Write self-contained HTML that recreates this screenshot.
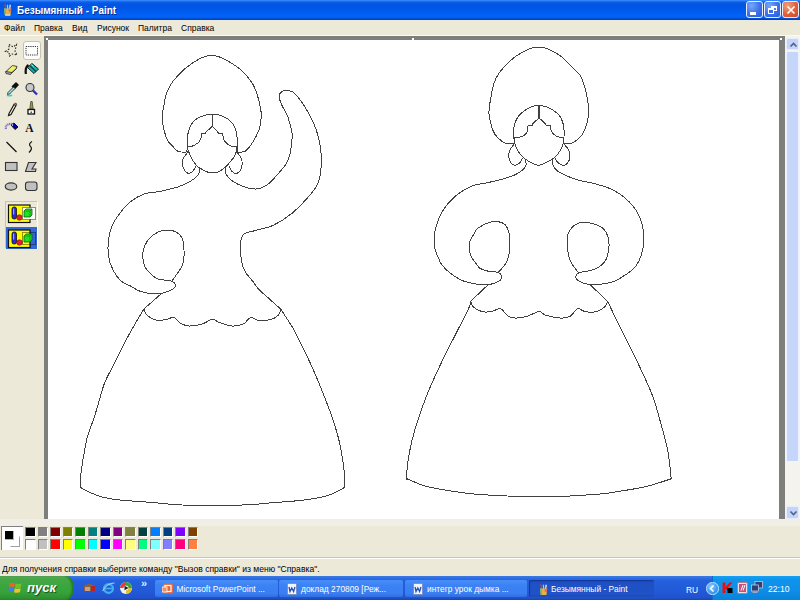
<!DOCTYPE html>
<html><head><meta charset="utf-8">
<style>
*{margin:0;padding:0;box-sizing:border-box}
html,body{width:800px;height:600px;overflow:hidden;background:#ece9d8;font-family:"Liberation Sans",sans-serif}
.abs{position:absolute}
#title{left:0;top:0;width:800px;height:20px;background:linear-gradient(#3d92ff 0px,#1a6af0 1.5px,#0656e4 3px,#0055e4 6px,#005bec 11px,#0062f6 16px,#0060f4 17.5px,#0046c8 19px,#0040b8 20px)}
#title .t{left:17px;top:4px;color:#fff;font-size:10.6px;font-weight:bold;white-space:nowrap;transform-origin:0 0;transform:scaleX(0.94);text-shadow:1px 1px 0 #0b2a8a}
.wb{top:1px;width:17px;height:17px;border:1px solid #e8eefc;border-radius:3px;background:radial-gradient(circle at 30% 25%,#7aa6f8,#3a72ea 55%,#2a5ad8)}
#menu{left:0;top:20px;width:800px;height:16px;font-size:9.2px;color:#000;background:#ece9d8}
#menu span{position:absolute;top:2.5px;white-space:nowrap;transform:scaleX(0.925);transform-origin:0 0}
#canvasbg{left:44px;top:36px;width:741px;height:483px;background:#7e7f7a}
#canvas{left:48px;top:40px;width:731px;height:478.5px;background:#fff}
#status{left:0;top:557px;width:800px;height:19px;background:#ece9d8;border-top:1px solid #c8c5b5}
#status .t{left:1.5px;top:5.5px;font-size:9px;color:#000;white-space:nowrap;transform:scaleX(0.953);transform-origin:0 0}
#task{left:0;top:576px;width:800px;height:24px;background:linear-gradient(#3d83f0 0%,#2c6fe8 8%,#245fdc 20%,#225ad8 60%,#2152d0 90%,#1a45b0 100%)}
.tb{top:3.5px;height:17.5px;border-radius:2px;background:linear-gradient(#4a8ef6,#3c82f4 30%,#3a7ef2 80%,#2f6ee0);color:#fff;font-size:8.4px}
.tb span{position:absolute;left:22px;top:4.5px;white-space:nowrap}
.sw{position:absolute;width:10.5px;height:10.5px;border-top:1px solid #808080;border-left:1px solid #808080;border-right:1px solid #fff;border-bottom:1px solid #fff}
</style></head><body>
<div id="title" class="abs">
  <svg class="abs" style="left:3px;top:3px" width="9" height="13" viewBox="0 0 9 13">
    <path d="M1.2 1.5L2.5 1L3.2 6L2 6Z" fill="#b04848"/>
    <path d="M3.8 2L5 1.5L5.3 6L4 6Z" fill="#a0d8a0"/>
    <path d="M6.5 1.5L8 2L7.2 6L6 6Z" fill="#d8e0f8"/>
    <path d="M1 5.5L8.2 5.5L7.5 12L1.8 12Z" fill="#e8b040"/>
    <path d="M1 5.5L3 5.5L2.8 12L1.8 12Z" fill="#60c080"/>
    <path d="M5.5 6L8.2 5.5L7.8 9L5.8 9Z" fill="#e87060"/>
    <path d="M2 11.5L7.5 11.5L7.3 12.8L2.2 12.8Z" fill="#d8e8f8"/>
  </svg>
  <div class="abs t" id="ttl">Безымянный - Paint</div>
  <div class="abs wb" style="left:746px"><div class="abs" style="left:3px;top:10px;width:5.5px;height:2.5px;background:#fff"></div></div>
  <div class="abs wb" style="left:764px"><div class="abs" style="left:5.5px;top:3.5px;width:6px;height:5px;border:1px solid #fff;border-top-width:2px"></div><div class="abs" style="left:3px;top:6px;width:6px;height:5.5px;border:1px solid #fff;border-top-width:2px;background:#3a6ee6"></div></div>
  <div class="abs wb" style="left:782px;background:radial-gradient(circle at 30% 25%,#f0a080,#e0603a 55%,#c8482a)">
    <svg class="abs" style="left:2px;top:2px" width="12" height="12"><path d="M2.5 2.5L9.5 9.5M9.5 2.5L2.5 9.5" stroke="#fff" stroke-width="1.6"/></svg>
  </div>
</div>
<div id="menu" class="abs">
  <span style="left:4px">Файл</span>
  <span style="left:34px">Правка</span>
  <span style="left:72px">Вид</span>
  <span style="left:97px">Рисунок</span>
  <span style="left:138px">Палитра</span>
  <span style="left:181px">Справка</span>
</div>
<div class="abs" style="left:0;top:35px;width:800px;height:1px;background:#fbfaf4"></div>
<div class="abs" style="left:22.5px;top:41px;width:18px;height:19px;border-radius:3px;background:#fdfdfb;border:1px solid #c4c1b2"></div><svg class="abs" style="left:0;top:36px" width="44" height="220" viewBox="0 0 44 220"><path d="M9 8.5L13 11L16.5 8.5L15 15L17 19L12 18L9.5 20L9 16L5.5 15.5L9 13Z" fill="none" stroke="#222" stroke-width="1.1" stroke-dasharray="1.5 1.5"/><rect x="26" y="10.5" width="11.5" height="8.5" fill="none" stroke="#333" stroke-width="1" stroke-dasharray="1.2 1"/><path d="M6 35.5L12.5 29.5L17 30.5L16 33L10.5 38Z" fill="#f0f070" stroke="#333" stroke-width="0.9"/><path d="M5.5 35.5L6 37.5L10.5 38.5L12 36.5Z" fill="#b0b0b0" stroke="#333" stroke-width="0.9"/><path d="M12 36.5L16.5 32.5" stroke="#333" stroke-width="0.9"/><path d="M25.8 38Q25 31 28.5 29" fill="none" stroke="#111" stroke-width="2.2"/><path d="M27.5 31.5L32 27.5L38.5 33L34 37.5Z" fill="#18b0b0" stroke="#102020" stroke-width="1"/><path d="M30 30L36 35.5" stroke="#0a4040" stroke-width="1.3"/><path d="M31.5 28.5L33.5 30.5" stroke="#a0f0f0" stroke-width="1"/><path d="M12.5 50.5L16 47L18 49L14.5 52.5Z" fill="#111" stroke="#111" stroke-width="1.6" stroke-linejoin="round"/><path d="M13.5 51L8 56.5L7.5 58.5L9.5 58L15 52.5Z" fill="#a0f0f0" stroke="#222" stroke-width="0.9"/><ellipse cx="9.5" cy="59.5" rx="3" ry="1.1" fill="#30d0d0"/><circle cx="30" cy="51.5" r="4" fill="#c8c8c8" stroke="#333" stroke-width="1.1"/><path d="M33 54.5L37 58.5" stroke="#3030c0" stroke-width="2.4"/><path d="M9 77.5L14 68.5L16 69.5L11 78.5L8.5 79.5Z" fill="#f0f0d0" stroke="#111" stroke-width="1.1"/><path d="M14 68.5L15 67L17 68L16 69.5Z" fill="#c08080" stroke="#333" stroke-width="0.7"/><path d="M30.8 65.5L32.2 65.5L33.2 73L29.8 73Z" fill="#a0a020" stroke="#333" stroke-width="0.7"/><rect x="28" y="73.5" width="6.5" height="4.5" fill="#fff" stroke="#111" stroke-width="1.3"/><rect x="30.5" y="75.5" width="1.5" height="1.5" fill="#555"/><path d="M6 93Q5 90 8 88.5Q10 87.5 12 88" fill="none" stroke="#8070d0" stroke-width="2.2" stroke-dasharray="1 0.6"/><path d="M11 89L14 87L18 91L15 93.5Z" fill="#0000a0" stroke="#111" stroke-width="1"/><circle cx="12.5" cy="89" r="0.8" fill="#fff"/><text x="25.2" y="96.3" font-family="Liberation Serif" font-weight="bold" font-size="11.5" fill="#111">A</text><path d="M6.5 106L16.5 116" stroke="#111" stroke-width="1.2"/><path d="M32 105.5Q28 108 30.5 110.5Q33 112.5 29 116.5" fill="none" stroke="#111" stroke-width="1.2"/><rect x="5.5" y="126.5" width="11.5" height="8" fill="#c0c0c0" stroke="#333" stroke-width="1.1"/><path d="M28.5 126.5L36 126.5L32 133L36 133L35.5 135.5L25.5 135.5Z" fill="#c0c0c0" stroke="#333" stroke-width="1.1"/><ellipse cx="11" cy="150.5" rx="5.8" ry="3.6" fill="#c0c0c0" stroke="#333" stroke-width="1.1"/><rect x="25.5" y="146" width="11.5" height="8.5" rx="2.5" fill="#c0c0c0" stroke="#333" stroke-width="1.1"/></svg><div class="abs" style="left:5px;top:201px;width:32.5px;height:48px;border-top:1px solid #c8c4b4;border-left:1px solid #c8c4b4;border-right:1px solid #fff;border-bottom:1px solid #fff"></div><div class="abs" style="left:6px;top:227px;width:31px;height:21.5px;background:#3168d5"></div><svg class="abs" style="left:7px;top:203.5px" width="30" height="20" viewBox="0 0 30 20"><rect x="1.5" y="1" width="21.5" height="17.5" fill="#ffff00" stroke="#111" stroke-width="1.2"/><rect x="5" y="3" width="4.5" height="12" rx="2" fill="#2a2ad8" stroke="#111" stroke-width="0.8"/><rect x="6" y="4.5" width="1.2" height="6" fill="#a0a0ff"/><circle cx="12.5" cy="13.5" r="2.8" fill="#e02040" stroke="#600" stroke-width="0.5"/><rect x="15.5" y="3.5" width="13" height="12" fill="#fff" stroke="#111" stroke-width="0.9" stroke-dasharray="1 1"/><path d="M17 7L19 5L25 5L25 11L23 13L17 13Z" fill="#20e020" stroke="#106010" stroke-width="0.8"/><path d="M17 7L23 7L25 5M23 7L23 13" fill="none" stroke="#0a800a" stroke-width="0.6"/></svg><svg class="abs" style="left:7px;top:228.5px" width="30" height="20" viewBox="0 0 30 20"><rect x="1.5" y="1" width="21.5" height="17.5" fill="#ffff00" stroke="#111" stroke-width="1.2"/><rect x="5" y="3" width="4.5" height="12" rx="2" fill="#2a2ad8" stroke="#111" stroke-width="0.8"/><rect x="6" y="4.5" width="1.2" height="6" fill="#a0a0ff"/><circle cx="12.5" cy="13.5" r="2.8" fill="#e02040" stroke="#600" stroke-width="0.5"/><rect x="15.5" y="3.5" width="13" height="12" fill="none" stroke="#111" stroke-width="0.9" stroke-dasharray="1 1"/><path d="M17 7L19 5L25 5L25 11L23 13L17 13Z" fill="#20e020" stroke="#106010" stroke-width="0.8"/><path d="M17 7L23 7L25 5M23 7L23 13" fill="none" stroke="#0a800a" stroke-width="0.6"/></svg>
<div id="canvasbg" class="abs"></div>
<div id="canvas" class="abs"></div>
<div class="abs" style="left:779.5px;top:37.5px;width:2px;height:2px;background:#fff"></div><div class="abs" style="left:46px;top:38px;width:2px;height:2px;background:#fff"></div><div class="abs" style="left:412px;top:38px;width:2px;height:2px;background:#fff"></div>
<div class="abs" style="left:785px;top:36px;width:15px;height:483px;background:#f4f3ee"></div>
<div class="abs" style="left:786px;top:37.5px;width:12.5px;height:12.5px;border-radius:2px;background:#c4d3fb;border:1px solid #e6eefc">
  <svg class="abs" style="left:1.5px;top:2px" width="9" height="8"><path d="M1.5 5.5L4.5 2.5L7.5 5.5" fill="none" stroke="#4d6185" stroke-width="1.6"/></svg>
</div>
<div class="abs" style="left:786px;top:51px;width:12.5px;height:411px;border-radius:2px;background:#c6d6fb;border:1px solid #eef3fe"></div>
<div class="abs" style="left:786px;top:505.5px;width:12.5px;height:13px;border-radius:2px;background:#c4d3fb;border:1px solid #e6eefc">
  <svg class="abs" style="left:1.5px;top:2.5px" width="9" height="8"><path d="M1.5 2.5L4.5 5.5L7.5 2.5" fill="none" stroke="#4d6185" stroke-width="1.6"/></svg>
</div>
<svg class="abs" width="800" height="600" viewBox="0 0 800 600" style="left:0;top:0"><g fill="none" stroke="#404040" stroke-width="1" stroke-linejoin="round" shape-rendering="crispEdges"><path d="M187.5 152.0C186.0 151.9 180.9 152.6 178.3 151.5C175.7 150.4 173.8 147.4 172.0 145.5C170.2 143.6 168.7 143.0 167.3 140.0C165.9 137.0 164.4 131.4 163.5 127.5C162.6 123.6 162.1 119.8 162.1 116.5C162.1 113.2 162.8 111.5 163.5 107.8C164.2 104.0 164.9 98.1 166.3 94.0C167.7 89.9 169.3 86.7 171.8 83.0C174.3 79.3 178.4 75.0 181.4 72.0C184.4 69.0 186.6 67.3 189.6 65.1C192.6 62.9 196.6 60.4 199.3 58.9C202.1 57.4 204.1 56.7 206.1 56.2C208.1 55.7 209.8 55.8 211.6 55.8C213.4 55.8 214.8 55.6 217.1 56.2C219.4 56.8 222.2 57.9 225.4 59.6C228.6 61.3 233.2 64.2 236.4 66.5C239.6 68.8 241.9 70.4 244.7 73.4C247.4 76.4 250.8 81.0 252.9 84.4C255.0 87.8 255.7 90.1 257.0 94.0C258.3 97.9 259.8 104.0 260.5 107.8C261.2 111.5 261.3 113.2 261.2 116.5C261.1 119.8 260.7 124.1 259.8 127.5C258.9 130.9 257.2 134.1 255.7 137.1C254.1 140.1 252.2 143.2 250.5 145.5C248.8 147.8 247.2 149.9 245.5 151.0C243.8 152.1 241.9 152.1 240.5 152.3C239.1 152.5 237.8 152.3 237.2 152.3"/><path d="M187.0 152.0C187.0 151.1 187.0 149.3 187.1 146.4C187.2 143.5 187.0 138.4 187.7 134.7C188.4 131.0 189.6 127.2 191.2 124.4C192.8 121.7 195.0 119.8 197.4 118.2C199.8 116.7 203.2 115.7 205.6 115.1C208.0 114.5 209.8 114.4 212.1 114.4C214.4 114.4 216.8 114.3 219.4 115.1C222.0 115.8 225.3 117.4 227.6 118.9C229.9 120.5 231.6 122.1 233.1 124.4C234.6 126.7 235.8 128.9 236.5 132.6C237.2 136.3 237.5 143.2 237.6 146.4C237.7 149.6 237.3 151.1 237.2 152.0"/><path d="M187.0 146.4C187.2 147.2 187.6 148.8 188.4 151.0C189.2 153.2 190.7 156.9 192.1 159.3C193.5 161.8 195.3 164.2 196.7 165.7C198.1 167.2 198.6 167.3 200.4 168.4C202.2 169.5 205.8 171.3 207.7 172.1C209.6 172.9 210.3 173.0 212.0 173.0C213.7 173.0 215.8 172.9 218.0 172.0C220.2 171.1 223.0 169.2 225.0 167.5C227.0 165.8 228.5 163.8 230.0 162.0C231.5 160.2 233.0 158.7 234.0 157.0C235.0 155.3 235.5 153.8 236.0 152.0C236.5 150.2 237.0 147.3 237.2 146.4"/><path d="M212.1 114.4L212.1 126.4"/><path d="M212.1 126.4C211.8 126.7 211.0 127.6 210.4 128.2C209.8 128.8 209.1 129.3 208.4 129.9C207.7 130.5 206.9 131.3 206.3 131.9C205.7 132.5 205.7 133.0 204.9 133.3C204.1 133.7 202.1 133.5 201.5 134.0C200.9 134.5 201.3 135.3 201.2 136.1C201.1 136.9 201.2 137.8 200.8 138.8C200.4 139.8 199.6 141.2 198.7 142.2C197.8 143.2 196.3 144.0 195.3 144.6C194.3 145.2 194.0 145.7 192.6 146.0C191.2 146.3 188.0 146.3 187.1 146.4"/><path d="M212.1 126.4C212.5 126.8 213.8 128.1 214.6 128.8C215.3 129.5 215.9 129.8 216.6 130.6C217.3 131.3 217.7 132.7 218.7 133.3C219.7 133.9 221.8 133.4 222.5 134.0C223.2 134.6 222.8 135.7 223.1 136.7C223.4 137.7 223.6 139.0 224.2 140.2C224.8 141.3 225.8 142.6 226.9 143.6C228.0 144.6 229.3 145.5 231.0 146.0C232.7 146.5 236.2 146.3 237.2 146.4"/><path d="M187.5 152.4C186.9 153.2 184.8 155.8 183.9 157.4C183.0 159.0 182.1 160.2 182.0 162.0C181.9 163.8 182.5 166.6 183.4 168.4C184.3 170.2 186.1 172.4 187.5 173.0C188.9 173.6 190.7 172.9 192.0 172.0C193.3 171.1 194.6 168.6 195.3 167.5C196.0 166.4 196.0 166.0 196.2 165.7"/><path d="M236.0 151.5C236.7 152.2 239.0 154.4 240.0 156.0C241.0 157.6 241.8 159.0 242.0 161.0C242.2 163.0 242.3 165.9 241.5 168.0C240.7 170.1 238.6 172.9 237.0 173.5C235.4 174.1 233.3 172.7 232.0 171.5C230.7 170.3 229.5 167.2 229.0 166.3"/><path d="M199.4 168.4C199.3 169.2 199.4 171.6 199.0 173.0C198.6 174.4 198.1 175.3 196.7 176.7C195.2 178.1 193.4 179.6 190.3 181.3C187.2 183.0 183.4 185.1 178.3 186.8C173.2 188.5 165.7 190.2 160.0 191.4C154.3 192.6 149.0 192.2 144.0 194.0C139.0 195.8 134.0 198.8 130.0 202.0C126.0 205.2 123.0 209.0 120.0 213.0C117.0 217.0 113.9 221.5 112.0 226.0C110.1 230.5 109.1 235.0 108.5 240.0C107.9 245.0 107.8 251.0 108.5 256.0C109.2 261.0 110.9 265.8 113.0 270.0C115.1 274.2 118.2 278.4 121.0 281.0C123.8 283.6 126.8 284.1 130.0 285.8C133.2 287.5 136.2 289.9 140.0 291.2C143.8 292.6 148.6 293.5 152.5 293.8C156.4 294.0 159.8 293.7 163.3 292.9C166.8 292.1 171.3 290.1 173.3 288.8C175.3 287.4 175.7 285.9 175.4 284.6C175.1 283.4 174.7 282.2 171.7 281.2C168.7 280.3 161.2 280.2 157.5 278.8C153.8 277.3 151.4 274.8 149.2 272.5C147.0 270.2 145.2 268.4 144.2 265.0C143.2 261.6 142.4 256.2 143.0 252.0C143.6 247.8 145.5 243.3 148.0 240.0C150.5 236.7 154.7 233.7 158.0 232.0C161.3 230.3 165.0 230.0 168.0 230.0C171.0 230.0 173.7 230.7 176.0 232.0C178.3 233.3 180.7 235.0 182.0 238.0C183.3 241.0 183.9 245.5 184.0 250.0C184.1 254.5 184.6 259.8 182.5 265.0C180.4 270.2 173.5 278.5 171.7 281.2"/><path d="M161.7 293.3L143.8 309.1"/><path d="M143.8 309.1C144.4 310.2 145.3 313.7 147.5 315.6C149.7 317.5 153.8 319.7 156.9 320.3C160.0 320.9 163.5 319.9 166.3 319.4C169.1 318.9 171.5 316.9 173.8 317.5C176.1 318.1 177.8 321.7 180.3 323.1C182.8 324.5 185.2 325.8 188.8 326.0C192.4 326.2 198.0 325.2 201.9 324.1C205.8 323.0 209.4 319.7 212.2 319.4C215.0 319.1 215.5 321.1 218.8 322.2C222.1 323.3 227.8 325.7 231.9 326.0C236.0 326.3 240.1 325.5 243.2 324.1C246.3 322.7 248.2 318.1 250.7 317.5C253.2 316.9 254.8 320.0 258.2 320.3C261.6 320.6 267.9 320.3 271.3 319.4C274.7 318.5 277.2 316.4 278.8 314.7C280.4 313.0 280.4 310.0 280.7 309.1"/><path d="M225.3 167.7C225.4 168.8 225.1 171.9 226.0 174.0C226.9 176.1 228.2 177.9 231.0 180.0C233.8 182.1 238.8 185.0 243.0 186.5C247.2 188.0 252.0 189.2 256.0 189.0C260.0 188.8 263.5 187.3 267.0 185.0C270.5 182.7 273.8 178.5 277.0 175.0C280.2 171.5 283.8 167.5 286.0 164.0C288.2 160.5 289.1 157.3 290.0 154.0C290.9 150.7 291.2 147.4 291.5 144.0C291.8 140.6 292.6 137.8 292.0 133.3C291.4 128.9 289.8 122.2 288.0 117.3C286.2 112.4 282.8 107.5 281.3 104.0C279.8 100.5 279.0 98.1 279.2 96.0C279.4 93.9 281.0 92.1 282.7 91.2C284.4 90.3 287.1 90.1 289.3 90.7C291.5 91.3 292.9 91.2 296.0 94.7C299.1 98.2 304.4 105.6 308.0 112.0C311.6 118.4 315.1 125.8 317.3 133.3C319.5 140.9 321.1 149.3 321.3 157.3C321.5 165.3 320.9 174.6 318.7 181.3C316.5 188.0 312.4 192.0 308.0 197.3C303.6 202.6 297.8 208.6 292.0 213.3C286.2 218.0 279.5 222.4 273.3 225.3C267.1 228.2 259.6 229.2 254.7 230.7C249.8 232.1 246.4 232.1 244.0 234.0C241.6 235.9 241.0 239.3 240.5 242.0C240.0 244.7 240.7 246.9 240.8 250.0C241.0 253.1 240.7 257.2 241.4 260.8C242.1 264.4 243.3 268.3 245.2 271.7C247.1 275.1 250.5 278.3 252.8 281.4C255.2 284.4 257.0 287.5 259.3 290.0C261.6 292.5 263.2 293.4 266.8 296.6C270.4 299.8 278.4 307.0 280.7 309.1"/><path d="M143.8 309.1C142.3 311.6 138.1 318.5 135.0 324.0C131.9 329.5 128.3 335.7 125.0 342.0C121.7 348.3 118.3 355.3 115.0 362.0C111.7 368.7 107.6 375.7 105.0 382.0C102.4 388.3 101.2 393.9 99.4 400.0C97.6 406.1 95.9 412.2 93.9 418.3C91.9 424.4 89.1 430.6 87.4 436.7C85.7 442.8 84.9 448.9 83.8 455.0C82.7 461.1 81.6 468.0 81.0 473.4C80.4 478.8 80.2 484.9 80.1 487.2"/><path d="M80.1 487.2C81.5 487.9 84.5 490.0 88.3 491.7C92.1 493.4 97.7 495.8 103.0 497.2C108.3 498.6 111.8 499.1 120.0 500.0C128.2 500.9 142.1 501.7 152.5 502.5C162.9 503.3 167.5 504.6 182.5 505.0C197.5 505.4 227.1 505.4 242.5 505.0C257.9 504.6 265.4 503.2 275.0 502.5C284.6 501.8 292.5 501.3 300.0 500.5C307.5 499.7 314.5 498.6 320.0 497.5C325.5 496.4 328.8 495.3 333.0 493.6C337.2 491.9 343.0 488.3 345.0 487.2"/><path d="M280.7 309.1C282.9 312.6 289.8 322.5 294.0 330.0C298.2 337.5 302.3 346.3 306.0 354.0C309.7 361.7 312.7 368.3 316.0 376.0C319.3 383.7 323.2 393.6 325.7 400.0C328.2 406.4 329.2 408.9 331.2 414.7C333.2 420.5 335.9 428.8 337.6 434.9C339.3 441.0 340.2 445.6 341.3 451.4C342.4 457.2 343.4 463.7 344.0 469.7C344.6 475.7 344.8 484.3 345.0 487.2"/><path d="M514.7 143.3C513.2 143.3 508.8 144.2 506.0 143.3C503.2 142.4 500.2 140.2 498.0 138.0C495.8 135.8 494.2 134.1 492.7 130.0C491.2 125.9 489.4 118.5 489.0 113.5C488.6 108.5 489.7 104.8 490.5 99.8C491.3 94.8 492.6 87.7 494.0 83.3C495.4 78.9 496.4 77.0 498.8 73.6C501.2 70.1 505.4 65.6 508.4 62.6C511.4 59.6 513.6 57.8 516.6 55.8C519.6 53.8 523.5 51.6 526.3 50.3C529.0 49.0 531.0 48.2 533.1 47.8C535.2 47.3 536.8 47.6 538.6 47.6C540.4 47.6 542.0 47.3 544.1 47.8C546.2 48.2 548.0 48.8 551.0 50.3C554.0 51.8 558.5 54.4 562.0 57.1C565.5 59.9 568.7 63.8 571.7 66.8C574.7 69.8 577.9 72.0 579.9 75.0C581.9 78.0 582.7 80.5 584.0 84.6C585.3 88.7 586.7 95.0 587.5 99.8C588.3 104.6 589.3 108.5 588.8 113.5C588.3 118.5 586.3 125.9 584.7 130.0C583.1 134.1 581.5 135.8 579.3 138.0C577.1 140.2 574.0 142.4 571.3 143.3C568.6 144.2 564.6 143.3 563.3 143.3"/><path d="M514.7 143.3C514.7 143.1 514.6 142.8 514.5 141.8C514.4 140.8 514.0 138.9 513.8 137.3C513.6 135.7 513.3 134.1 513.4 132.0C513.5 129.9 513.7 127.1 514.5 124.5C515.3 121.9 516.5 118.7 518.3 116.3C520.0 113.9 522.6 111.9 525.0 110.3C527.4 108.7 530.2 107.3 532.5 106.5C534.8 105.7 536.8 105.4 538.9 105.4C541.0 105.4 543.1 105.8 545.3 106.5C547.5 107.2 549.8 108.1 552.0 109.5C554.2 110.9 557.0 112.8 558.8 114.8C560.5 116.8 561.6 119.0 562.5 121.5C563.4 124.0 563.8 127.2 564.0 129.8C564.2 132.4 564.1 135.3 564.0 137.3C563.9 139.3 563.4 140.8 563.3 141.8C563.2 142.8 563.3 143.1 563.3 143.3"/><path d="M514.0 138.0C514.1 138.9 514.0 141.1 514.7 143.3C515.4 145.5 516.3 148.7 518.0 151.3C519.7 153.9 522.2 156.7 524.7 158.7C527.2 160.7 530.4 162.2 532.7 163.3C535.0 164.4 536.5 165.4 538.7 165.3C540.9 165.2 543.5 163.9 546.0 162.7C548.5 161.5 551.5 160.1 554.0 158.0C556.5 155.9 559.2 152.4 560.7 150.0C562.2 147.6 562.8 145.3 563.3 143.3C563.8 141.3 563.9 138.9 564.0 138.0"/><path d="M538.9 105.4L538.9 118.1" stroke-width="2"/><path d="M538.9 118.1C538.4 118.5 536.9 119.8 535.9 120.8C534.9 121.8 533.6 123.0 532.9 123.8C532.2 124.6 532.7 125.2 531.8 125.6C530.9 126.0 528.3 125.3 527.6 126.0C526.9 126.7 527.9 128.6 527.6 129.8C527.4 131.1 526.9 132.4 526.1 133.5C525.3 134.6 524.2 135.4 522.8 136.1C521.4 136.8 519.1 137.4 517.5 137.6C515.9 137.8 514.1 137.4 513.4 137.3"/><path d="M538.9 118.1C539.5 118.5 541.2 119.8 542.3 120.8C543.4 121.8 544.5 123.0 545.3 123.8C546.0 124.6 545.9 125.2 546.8 125.6C547.7 126.0 549.8 125.3 550.5 126.0C551.2 126.7 550.5 128.6 550.9 129.8C551.3 131.1 551.9 132.4 552.8 133.5C553.7 134.6 555.1 135.4 556.5 136.1C557.9 136.8 559.8 137.4 561.0 137.6C562.2 137.8 563.5 137.4 564.0 137.3"/><path d="M514.7 143.3C513.9 144.4 511.0 147.8 510.0 150.0C509.0 152.2 508.5 154.5 508.7 156.7C508.9 158.9 510.2 161.9 511.3 163.3C512.4 164.7 513.8 165.4 515.3 165.3C516.8 165.2 518.8 163.9 520.0 162.7C521.2 161.5 522.2 158.8 522.7 158.0"/><path d="M563.3 143.3C564.2 144.4 567.6 147.8 568.7 150.0C569.8 152.2 570.2 154.5 570.0 156.7C569.8 158.9 568.5 161.9 567.3 163.3C566.1 164.7 564.4 165.5 562.7 165.3C561.0 165.1 558.5 163.2 557.3 162.0C556.1 160.8 555.6 158.7 555.3 158.0"/><path d="M525.3 158.7C525.4 159.7 526.3 162.9 526.0 164.7C525.7 166.5 525.1 167.6 523.3 169.3C521.5 171.0 518.8 173.0 515.3 174.7C511.7 176.4 506.7 178.0 502.0 179.3C497.3 180.6 492.0 181.7 487.3 182.7C482.6 183.7 478.4 183.8 474.0 185.3C469.6 186.9 464.7 189.3 460.7 192.0C456.7 194.7 453.1 198.0 450.0 201.3C446.9 204.6 444.2 208.1 442.0 212.0C439.8 215.9 437.8 221.2 436.5 225.0C435.2 228.8 434.8 231.3 434.5 235.0C434.2 238.7 433.9 243.3 434.5 247.0C435.1 250.7 436.8 254.0 438.0 257.0C439.2 260.0 440.0 262.3 442.0 265.0C444.0 267.7 447.0 270.6 450.0 273.0C453.0 275.4 456.9 277.9 460.0 279.5C463.1 281.1 465.0 281.6 468.3 282.5C471.6 283.4 476.7 284.2 480.0 284.6C483.3 285.0 485.8 284.9 488.3 284.6C490.8 284.3 493.0 283.7 495.0 282.9C497.0 282.1 499.3 281.2 500.4 280.0C501.5 278.8 502.0 277.1 501.7 275.8C501.4 274.6 500.5 273.3 498.3 272.5C496.1 271.7 491.4 271.9 488.3 271.2C485.2 270.6 482.2 269.8 480.0 268.3C477.8 266.8 476.3 263.7 475.0 262.0C473.7 260.3 472.9 259.8 472.0 258.0C471.1 256.2 469.8 253.8 469.5 251.0C469.2 248.2 469.2 243.8 470.0 241.0C470.8 238.2 472.7 236.2 474.0 234.0C475.3 231.8 475.1 230.0 478.0 228.0C480.9 226.0 487.3 222.9 491.3 222.0C495.3 221.1 499.3 221.7 502.0 222.7C504.7 223.7 506.0 225.1 507.3 228.0C508.6 230.9 510.0 234.7 510.0 240.0C510.0 245.3 509.4 254.6 507.5 260.0C505.6 265.4 499.8 270.4 498.3 272.5"/><path d="M488.3 284.6L470.6 301.3"/><path d="M470.6 301.3C471.1 302.2 471.5 305.2 473.4 306.9C475.3 308.6 478.9 310.8 481.9 311.6C484.9 312.4 488.2 312.1 491.3 311.6C494.4 311.1 497.8 308.0 500.6 308.8C503.4 309.6 505.7 314.8 508.2 316.3C510.7 317.9 512.6 318.1 515.7 318.1C518.8 318.1 523.0 317.4 526.9 316.3C530.8 315.2 536.0 311.8 539.1 311.6C542.2 311.4 542.1 314.2 545.7 315.3C549.3 316.4 556.6 317.9 560.7 318.1C564.8 318.3 567.3 317.9 570.1 316.3C572.9 314.8 575.1 309.6 577.6 308.8C580.1 308.0 582.0 311.1 585.1 311.6C588.2 312.1 593.0 312.4 596.3 311.6C599.6 310.8 602.9 308.6 604.8 306.9C606.7 305.2 607.1 302.2 607.6 301.3"/><path d="M552.7 159.3C552.7 160.2 551.8 162.7 552.7 164.7C553.6 166.7 555.3 169.3 558.0 171.3C560.7 173.3 564.9 175.1 568.7 176.7C572.5 178.3 576.5 179.6 580.7 180.7C584.9 181.8 588.3 181.8 594.0 183.5C599.7 185.2 608.5 187.2 615.0 191.0C621.5 194.8 628.5 200.5 633.0 206.0C637.5 211.5 640.2 217.5 642.0 224.0C643.8 230.5 644.5 238.0 643.5 245.0C642.5 252.0 640.2 260.2 636.0 266.0C631.8 271.8 622.3 276.8 618.0 279.5C613.7 282.2 613.3 281.6 610.0 282.5C606.7 283.4 601.6 284.2 598.3 284.6C595.0 285.0 592.8 285.0 590.0 284.6C587.2 284.2 583.9 283.4 581.7 282.5C579.5 281.6 577.6 280.4 576.7 279.2C575.8 277.9 575.8 276.1 576.2 275.0C576.7 273.9 577.5 273.1 579.2 272.5C580.9 271.9 583.8 271.9 586.7 271.2C589.6 270.6 593.5 270.2 596.7 268.3C599.9 266.4 603.8 264.1 605.8 260.0C607.8 255.9 609.2 248.5 609.0 243.5C608.8 238.5 607.0 233.2 604.5 230.0C602.0 226.8 598.0 225.2 594.0 224.0C590.0 222.8 584.5 221.5 580.5 222.5C576.5 223.5 572.2 226.8 570.0 230.0C567.8 233.2 567.0 237.0 567.0 242.0C567.0 247.0 568.0 254.8 570.0 260.0C572.0 265.2 577.5 271.2 579.0 273.5"/><path d="M590.0 284.6L607.6 301.3"/><path d="M470.6 301.3C470.4 302.1 471.9 301.2 469.6 306.3C467.3 311.4 461.8 322.1 457.0 331.6C452.2 341.1 446.1 352.7 441.1 363.3C436.1 373.9 431.1 384.4 426.9 395.0C422.7 405.6 418.7 417.1 415.8 426.6C412.9 436.1 411.1 443.5 409.5 451.9C407.9 460.3 406.7 472.7 406.3 477.2C405.9 481.7 406.9 478.5 407.0 478.8"/><path d="M407.0 478.8C410.5 480.1 418.7 484.5 428.0 486.8C437.3 489.1 454.3 491.5 463.0 492.8C471.7 494.0 472.7 494.0 480.0 494.5C487.3 495.0 497.0 495.7 507.0 496.0C517.0 496.3 529.5 496.2 540.0 496.2C550.5 496.2 560.0 496.4 570.0 496.0C580.0 495.6 593.3 494.5 600.0 494.0C606.7 493.5 602.5 493.9 610.0 492.8C617.5 491.6 634.8 489.1 645.0 486.8C655.2 484.5 666.9 480.1 671.2 478.8"/><path d="M607.6 301.3C610.0 306.4 617.1 321.3 622.2 331.6C627.3 341.9 633.0 352.7 638.0 363.3C643.0 373.9 648.2 384.4 652.2 395.0C656.2 405.6 659.1 417.1 661.7 426.6C664.3 436.1 666.4 443.2 668.0 451.9C669.6 460.6 670.7 474.3 671.2 478.8"/></g></svg>
<div class="abs" style="left:0;top:519px;width:800px;height:7px;background:#f1efe5"></div>
<div class="abs" style="left:1px;top:526px;width:22px;height:23.5px;background:#fff;border-top:1px solid #808080;border-left:1px solid #808080"></div><div class="abs" style="left:9.5px;top:536px;width:10.5px;height:10.5px;background:#fff;border-right:1px solid #a0a0a0;border-bottom:1px solid #a0a0a0;border-top:1px solid #fff;border-left:1px solid #fff"></div><div class="abs" style="left:5px;top:531px;width:8.5px;height:9px;background:#000;border-right:1px solid #b0b0b0;border-bottom:1px solid #b0b0b0"></div><div class="sw" style="left:25.0px;top:526.5px;background:#000000"></div><div class="sw" style="left:25.0px;top:539px;background:#ffffff"></div><div class="sw" style="left:37.5px;top:526.5px;background:#808080"></div><div class="sw" style="left:37.5px;top:539px;background:#c0c0c0"></div><div class="sw" style="left:50.0px;top:526.5px;background:#800000"></div><div class="sw" style="left:50.0px;top:539px;background:#ff0000"></div><div class="sw" style="left:62.5px;top:526.5px;background:#808000"></div><div class="sw" style="left:62.5px;top:539px;background:#ffff00"></div><div class="sw" style="left:75.0px;top:526.5px;background:#008000"></div><div class="sw" style="left:75.0px;top:539px;background:#00ff00"></div><div class="sw" style="left:87.5px;top:526.5px;background:#008080"></div><div class="sw" style="left:87.5px;top:539px;background:#00ffff"></div><div class="sw" style="left:100.0px;top:526.5px;background:#000080"></div><div class="sw" style="left:100.0px;top:539px;background:#0000ff"></div><div class="sw" style="left:112.5px;top:526.5px;background:#800080"></div><div class="sw" style="left:112.5px;top:539px;background:#ff00ff"></div><div class="sw" style="left:125.0px;top:526.5px;background:#808040"></div><div class="sw" style="left:125.0px;top:539px;background:#ffff80"></div><div class="sw" style="left:137.5px;top:526.5px;background:#004040"></div><div class="sw" style="left:137.5px;top:539px;background:#00ff80"></div><div class="sw" style="left:150.0px;top:526.5px;background:#0080ff"></div><div class="sw" style="left:150.0px;top:539px;background:#80ffff"></div><div class="sw" style="left:162.5px;top:526.5px;background:#004080"></div><div class="sw" style="left:162.5px;top:539px;background:#8080ff"></div><div class="sw" style="left:175.0px;top:526.5px;background:#8000ff"></div><div class="sw" style="left:175.0px;top:539px;background:#ff0080"></div><div class="sw" style="left:187.5px;top:526.5px;background:#804000"></div><div class="sw" style="left:187.5px;top:539px;background:#ff8040"></div>
<div id="status" class="abs"><div class="abs" style="left:0;top:0;width:800px;height:1px;background:#fff"></div><div class="abs t">Для получения справки выберите команду "Вызов справки" из меню "Справка".</div></div>
<div id="task" class="abs"><div class="abs" style="left:0;top:0;width:800px;height:1px;background:#3a78e0"></div><div class="abs" style="left:0;top:0;width:74px;height:24px;border-radius:0 8px 8px 0/0 12px 12px 0;background:linear-gradient(#68b068 0%,#4aa64a 10%,#3aa63e 40%,#36a23a 70%,#2e8a2e 100%);box-shadow:inset -2px 0 2px #207a20"></div><svg class="abs" style="left:8px;top:5px" width="15" height="14" viewBox="0 0 15 14"><path d="M1.5 2.5Q4 1 7 2.2L6.2 6.2Q3.5 5 1 6.2Z" fill="#f06030"/><path d="M7.8 2.4Q10.5 3.5 13.5 2.5L12.8 6.5Q10 7.5 7 6.4Z" fill="#70c030"/><path d="M1 7Q3.5 5.8 6 7L5.2 11Q2.5 10 0.3 11Z" fill="#3a80f0"/><path d="M6.8 7.2Q9.5 8.3 12.6 7.3L11.9 11.3Q9 12.3 6 11.2Z" fill="#f8c020"/></svg><div class="abs" style="left:27px;top:4px;color:#fff;font-size:13px;font-weight:bold;font-style:italic;text-shadow:1px 1px 1px #1a4a1a;white-space:nowrap" id="pusk">пуск</div><svg class="abs" style="left:83px;top:7px" width="13" height="9" viewBox="0 0 13 9"><path d="M1 3L6 0.5L12 3L12 8L1 8Z" fill="#8a6040"/><rect x="2" y="4" width="5" height="4" fill="#c8a080"/><rect x="8" y="3" width="4" height="5" fill="#c02020"/></svg><svg class="abs" style="left:102px;top:6px" width="13" height="12" viewBox="0 0 13 12"><ellipse cx="6.5" cy="6.5" rx="4.5" ry="4.3" fill="none" stroke="#40b0f0" stroke-width="2.2"/><path d="M2.5 6.5H10.5" stroke="#40b0f0" stroke-width="1.6"/><path d="M0.5 9Q5 1 12.5 1" fill="none" stroke="#a0d8ff" stroke-width="1"/></svg><svg class="abs" style="left:119px;top:5px" width="14" height="14" viewBox="0 0 14 14"><circle cx="7" cy="7" r="6" fill="#f0f0f0"/><path d="M7 1A6 6 0 0 1 13 7L9.5 7A2.5 2.5 0 0 0 7 4.5Z" fill="#40a040"/><path d="M13 7A6 6 0 0 1 7 13L7 9.5A2.5 2.5 0 0 0 9.5 7Z" fill="#e0c020"/><path d="M1 7A6 6 0 0 1 7 1L7 4.5A2.5 2.5 0 0 0 4.5 7Z" fill="#e04030"/><path d="M5.5 4.8L9.5 7L5.5 9.2Z" fill="#202020"/></svg><div class="abs" style="left:141px;top:1px;color:#dfe8ff;font-size:11px;font-weight:bold;letter-spacing:-1.5px">&raquo;</div><div class="abs tb" style="left:154.5px;width:123.0px;"><span>Microsoft PowerPoint ...</span><svg class="abs" style="left:7px;top:3px" width="12" height="11"><rect x="1" y="0.5" width="10" height="10" rx="1.5" fill="#e86838"/><rect x="3" y="2.5" width="6" height="6" fill="none" stroke="#fff" stroke-width="1.2"/><rect x="0" y="4" width="5" height="5" fill="#f09060" stroke="#fff" stroke-width="0.8"/></svg></div><div class="abs tb" style="left:279.0px;width:124.0px;"><span>доклад 270809 [Реж...</span><svg class="abs" style="left:7px;top:3px" width="12" height="12"><rect x="1.5" y="0.5" width="9" height="11" fill="#f0f4ff" stroke="#7088c0" stroke-width="0.8"/><path d="M3 4L4 8.5L5.8 5L7.6 8.5L9 4" fill="none" stroke="#2850b0" stroke-width="1.3"/></svg></div><div class="abs tb" style="left:405.0px;width:122.0px;"><span>интегр урок дымка ...</span><svg class="abs" style="left:7px;top:3px" width="12" height="12"><rect x="1.5" y="0.5" width="9" height="11" fill="#f0f4ff" stroke="#7088c0" stroke-width="0.8"/><path d="M3 4L4 8.5L5.8 5L7.6 8.5L9 4" fill="none" stroke="#2850b0" stroke-width="1.3"/></svg></div><div class="abs tb" style="left:529.0px;width:124.5px;background:linear-gradient(#1a48b8,#1f50c4 20%,#2052c8 80%,#1c4ab8);box-shadow:inset 1px 1px 1px #143a98"><span>Безымянный - Paint</span><svg class="abs" style="left:9.5px;top:3px" width="9" height="13" viewBox="0 0 9 13"><path d="M1.2 1.5L2.5 1L3.2 6L2 6Z" fill="#b04848"/><path d="M3.8 2L5 1.5L5.3 6L4 6Z" fill="#a0d8a0"/><path d="M6.5 1.5L8 2L7.2 6L6 6Z" fill="#d8e0f8"/><path d="M1 5.5L8.2 5.5L7.5 12L1.8 12Z" fill="#e8b040"/><path d="M1 5.5L3 5.5L2.8 12L1.8 12Z" fill="#60c080"/><path d="M5.5 6L8.2 5.5L7.8 9L5.8 9Z" fill="#e87060"/></svg></div><div class="abs" style="left:686px;top:9px;color:#fff;font-size:8.4px;white-space:nowrap">RU</div><div class="abs" style="left:712px;top:0;width:88px;height:24px;background:linear-gradient(#18a0f4 0%,#0f94ec 15%,#0e8ee8 60%,#0a82d8 100%);border-left:1px solid #0a6ad0"></div><div class="abs" style="left:706px;top:6px;width:12.5px;height:12.5px;border-radius:50%;background:radial-gradient(circle at 40% 35%,#8ed0ff,#3a9af0 60%,#2070d0);border:1px solid #c0e4ff"></div><svg class="abs" style="left:708px;top:8px" width="9" height="9"><path d="M5.5 1.5L2.5 4.5L5.5 7.5" fill="none" stroke="#fff" stroke-width="1.6"/></svg><svg class="abs" style="left:722px;top:6px" width="11" height="12"><path d="M0.5 0.5L3.5 0.5L3.5 5L7.5 0.5L10.5 0.5L6 5.5L10.5 11H7.5L3.5 6.5V11H0.5Z" fill="#e81010"/><rect x="5.5" y="6" width="5" height="5" fill="#000"/></svg><svg class="abs" style="left:737px;top:6px" width="11" height="12"><rect x="0.5" y="0.5" width="10" height="11" rx="1.5" fill="#f0e0e8" stroke="#b08090" stroke-width="1"/><rect x="2" y="2" width="7" height="8" fill="#c85078"/><path d="M4 8.5L6 3M6 8.5L8 3" stroke="#fff" stroke-width="1"/></svg><svg class="abs" style="left:751px;top:5px" width="12" height="13"><rect x="4" y="0.5" width="7.5" height="6.5" fill="#304070" stroke="#c0c8e0" stroke-width="0.8"/><rect x="0.5" y="4" width="7" height="6" fill="#304070" stroke="#c0c8e0" stroke-width="0.8"/><rect x="1.5" y="10.5" width="5" height="1.5" fill="#a0a8c0"/></svg><div class="abs" style="left:768px;top:8px;color:#fff;font-size:8.6px;white-space:nowrap">22:10</div></div>
</body></html>
